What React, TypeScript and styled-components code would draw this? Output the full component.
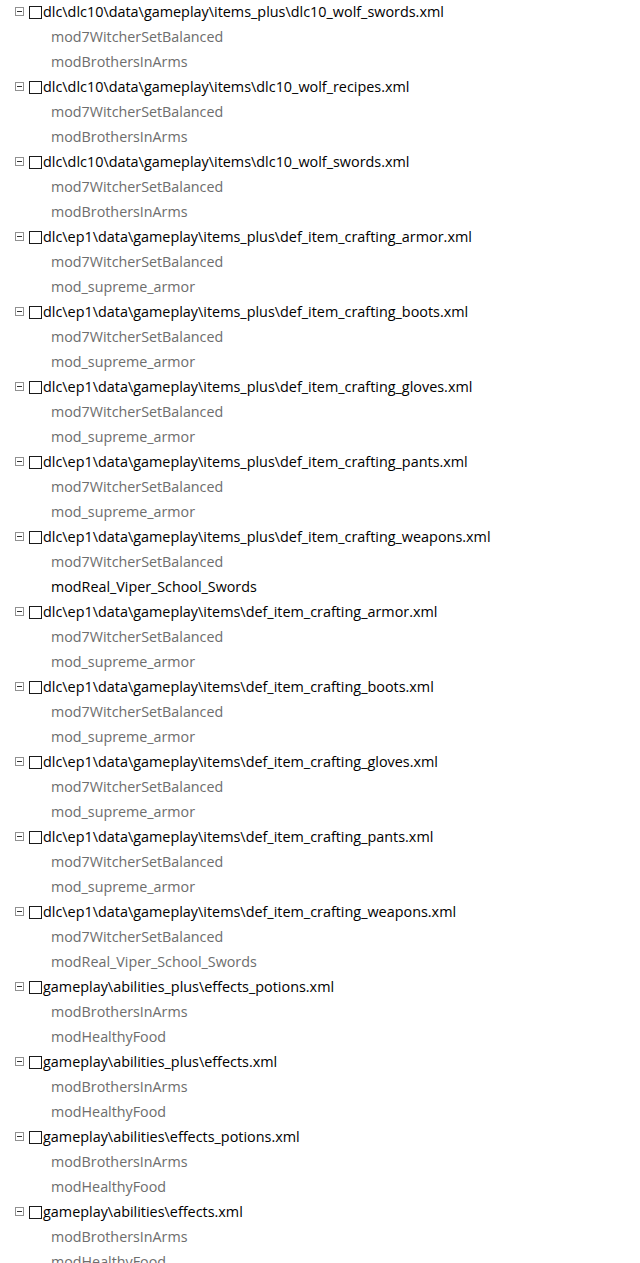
import React from "react";
import styled, { createGlobalStyle } from "styled-components";

const Global = createGlobalStyle`
  html, body { margin: 0; padding: 0; background: #ffffff; }
  body { font-family: "Segoe UI", "Open Sans", "Noto Sans", sans-serif; }
`;

type Group = { path: string; mods: { name: string; active?: boolean }[] };

const S = "mod7WitcherSetBalanced";
const B = "modBrothersInArms";
const A = "mod_supreme_armor";
const V = "modReal_Viper_School_Swords";
const H = "modHealthyFood";

const groups: Group[] = [
  { path: "dlc\\dlc10\\data\\gameplay\\items_plus\\dlc10_wolf_swords.xml", mods: [{ name: S }, { name: B }] },
  { path: "dlc\\dlc10\\data\\gameplay\\items\\dlc10_wolf_recipes.xml", mods: [{ name: S }, { name: B }] },
  { path: "dlc\\dlc10\\data\\gameplay\\items\\dlc10_wolf_swords.xml", mods: [{ name: S }, { name: B }] },
  { path: "dlc\\ep1\\data\\gameplay\\items_plus\\def_item_crafting_armor.xml", mods: [{ name: S }, { name: A }] },
  { path: "dlc\\ep1\\data\\gameplay\\items_plus\\def_item_crafting_boots.xml", mods: [{ name: S }, { name: A }] },
  { path: "dlc\\ep1\\data\\gameplay\\items_plus\\def_item_crafting_gloves.xml", mods: [{ name: S }, { name: A }] },
  { path: "dlc\\ep1\\data\\gameplay\\items_plus\\def_item_crafting_pants.xml", mods: [{ name: S }, { name: A }] },
  { path: "dlc\\ep1\\data\\gameplay\\items_plus\\def_item_crafting_weapons.xml", mods: [{ name: S }, { name: V, active: true }] },
  { path: "dlc\\ep1\\data\\gameplay\\items\\def_item_crafting_armor.xml", mods: [{ name: S }, { name: A }] },
  { path: "dlc\\ep1\\data\\gameplay\\items\\def_item_crafting_boots.xml", mods: [{ name: S }, { name: A }] },
  { path: "dlc\\ep1\\data\\gameplay\\items\\def_item_crafting_gloves.xml", mods: [{ name: S }, { name: A }] },
  { path: "dlc\\ep1\\data\\gameplay\\items\\def_item_crafting_pants.xml", mods: [{ name: S }, { name: A }] },
  { path: "dlc\\ep1\\data\\gameplay\\items\\def_item_crafting_weapons.xml", mods: [{ name: S }, { name: V }] },
  { path: "gameplay\\abilities_plus\\effects_potions.xml", mods: [{ name: B }, { name: H }] },
  { path: "gameplay\\abilities_plus\\effects.xml", mods: [{ name: B }, { name: H }] },
  { path: "gameplay\\abilities\\effects_potions.xml", mods: [{ name: B }, { name: H }] },
  { path: "gameplay\\abilities\\effects.xml", mods: [{ name: B }, { name: H }] },
];

const Tree = styled.div`
  display: flex;
  flex-direction: column;
  height: 1263px;
  overflow: hidden;
`;

const HeaderRow = styled.div`
  box-sizing: border-box;
  display: flex;
  flex: none;
  align-items: center;
  height: 25px;
  padding: 0 0 2px 15px;
  font-size: 14.4px;
  color: #000000;
  white-space: nowrap;
`;

const Expander = styled.span`
  box-sizing: border-box;
  width: 9px;
  height: 9px;
  border: 1px solid #919191;
  position: relative;
  flex: none;
  margin-right: 5px;
  &::after {
    content: "";
    position: absolute;
    left: 1px;
    right: 1px;
    top: 3px;
    height: 1px;
    background: #333333;
  }
`;

const Check = styled.span`
  box-sizing: border-box;
  width: 13px;
  height: 13px;
  border: 1px solid #1a1a1a;
  background: #ffffff;
  flex: none;
  margin-right: 1px;
  margin-top: 1px;
`;

const ModRow = styled.div<{ $active?: boolean }>`
  box-sizing: border-box;
  display: flex;
  flex: none;
  align-items: center;
  height: 25px;
  padding: 0 0 2px 51px;
  font-size: 14.3px;
  color: ${(p) => (p.$active ? "#000000" : "#6d6d6d")};
  white-space: nowrap;
`;

export default function App() {
  return (
    <>
      <Global />
      <Tree>
        {groups.map((g) => (
          <React.Fragment key={g.path}>
            <HeaderRow>
              <Expander />
              <Check />
              <span>{g.path}</span>
            </HeaderRow>
            {g.mods.map((m) => (
              <ModRow key={m.name} $active={m.active}>
                {m.name}
              </ModRow>
            ))}
          </React.Fragment>
        ))}
      </Tree>
    </>
  );
}
